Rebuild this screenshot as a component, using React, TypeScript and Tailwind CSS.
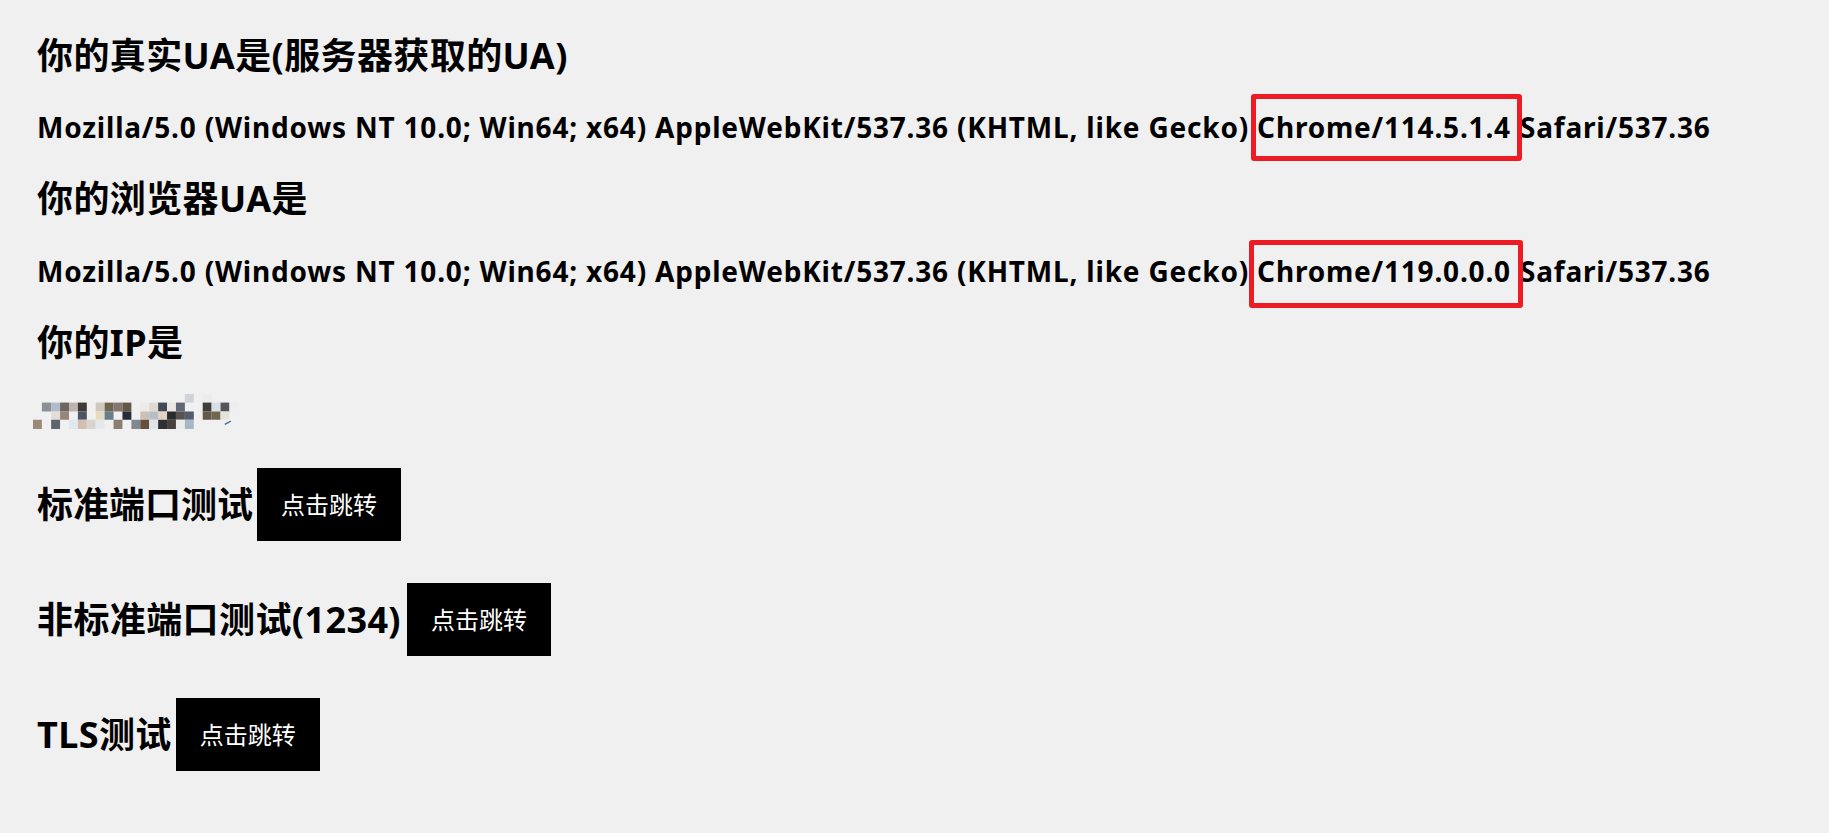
import React from "react";

type R = [number, number, string];

const rows: { y0: number; y1: number; cells: R[] }[] = [
  { y0: 42, y1: 68, cells: [[495, 522, "#d0d4d8"], [549, 576, "#ececec"]] },
  {
    y0: 68,
    y1: 95,
    cells: [
      [62, 90, "#8c8f94"], [90, 117, "#b0bccb"], [117, 144, "#6c6560"], [144, 171, "#bfb3ad"],
      [171, 198, "#3e3a36"], [225, 252, "#cfc8bf"], [252, 279, "#6e6550"], [279, 306, "#857670"],
      [306, 333, "#62584a"], [360, 387, "#ebebe9"], [387, 414, "#e0d9d0"], [414, 441, "#3f4b59"],
      [441, 468, "#ece6e0"], [468, 495, "#5f6873"], [549, 576, "#403c3a"], [576, 603, "#d9dfe6"],
      [603, 630, "#55545c"], [630, 657, "#eeeeee"],
    ],
  },
  {
    y0: 95,
    y1: 120,
    cells: [
      [90, 117, "#e4ddd6"], [117, 144, "#978677"], [171, 198, "#4c5564"], [225, 252, "#e6dbc2"],
      [252, 279, "#667e8a"], [306, 333, "#272c3a"], [360, 387, "#cbc1b4"], [387, 414, "#b4bec8"],
      [414, 441, "#e3d2bf"], [441, 468, "#2a2c30"], [468, 495, "#555250"], [495, 522, "#525c6c"],
      [549, 576, "#66584a"], [576, 603, "#716552"], [603, 630, "#e6e3dd"],
    ],
  },
  {
    y0: 120,
    y1: 148,
    cells: [
      [35, 62, "#9a8a78"], [90, 117, "#5e646c"], [144, 171, "#e1e8ee"], [171, 198, "#d4bdb3"],
      [198, 225, "#d8d4d0"], [225, 252, "#e4eaec"], [279, 306, "#8a7e73"], [333, 360, "#828890"],
      [360, 387, "#66503d"], [387, 414, "#e0e4e8"], [414, 441, "#303132"], [441, 468, "#48423e"],
      [468, 495, "#ececec"], [495, 522, "#a8b6c6"],
    ],
  },
];

function IpBlur() {
  return (
    <svg width={210} height={35} viewBox="35 42 630 106" className="block">
      {rows.map((r, i) =>
        r.cells.map(([x0, x1, c], j) => (
          <rect key={`${i}-${j}`} x={x0} y={r.y0} width={x1 - x0} height={r.y1 - r.y0} fill={c} />
        ))
      )}
      <path d="M616 134 L634 124" stroke="#3b6ea8" strokeWidth={4} />
    </svg>
  );
}

function JumpButton() {
  return (
    <button className="bg-black text-white text-[24px] font-normal leading-none tracking-normal w-[144px] h-[73px] shrink-0">
      点击跳转
    </button>
  );
}

export default function App() {
  return (
    <div className="min-h-screen bg-[#f0f0f0] text-black [font-family:'Noto_Sans','Noto_Sans_CJK_SC',sans-serif] pl-[37px] pt-[32px]">
      <h2 className="text-[36px] leading-[48px] font-bold tracking-[0.4px]">你的真实UA是(服务器获取的UA)</h2>
      <p className="mt-[27px] text-[28px] leading-[40px] font-bold tracking-[0.8px] whitespace-nowrap">
        Mozilla/5.0 (Windows NT 10.0; Win64; x64) AppleWebKit/537.36 (KHTML, like Gecko){" "}
        <span className="relative">
          Chrome/114.5.1.4
          <span className="absolute -left-[6px] -right-[11px] -top-[14px] -bottom-[15px] border-[5px] border-[#ed1c24] rounded-[3px]" />
        </span>{" "}
        <span className="ml-[1px]">Safari/537.36</span>
      </p>
      <h2 className="mt-[28px] text-[36px] leading-[48px] font-bold tracking-[0.4px]">你的浏览器UA是</h2>
      <p className="mt-[28px] text-[28px] leading-[40px] font-bold tracking-[0.8px] whitespace-nowrap">
        Mozilla/5.0 (Windows NT 10.0; Win64; x64) AppleWebKit/537.36 (KHTML, like Gecko){" "}
        <span className="relative">
          Chrome/119.0.0.0
          <span className="absolute -left-[8px] -right-[12px] -top-[12px] -bottom-[18px] border-[5px] border-[#ed1c24] rounded-[3px]" />
        </span>{" "}
        <span className="ml-[1px]">Safari/537.36</span>
      </p>
      <h2 className="mt-[28px] text-[36px] leading-[48px] font-bold tracking-[0.4px]">你的IP是</h2>
      <div className="mt-[27px] -ml-[5px]">
        <IpBlur />
      </div>
      <div className="mt-[39px] flex items-center gap-[4px]">
        <h2 className="text-[36px] leading-[48px] font-bold">标准端口测试</h2>
        <JumpButton />
      </div>
      <div className="mt-[42px] flex items-center gap-[6px]">
        <h2 className="text-[36px] leading-[48px] font-bold tracking-[0.4px]">非标准端口测试(1234)</h2>
        <JumpButton />
      </div>
      <div className="mt-[42px] flex items-center gap-[4px]">
        <h2 className="text-[36px] leading-[48px] font-bold tracking-[0.4px]">TLS测试</h2>
        <JumpButton />
      </div>
    </div>
  );
}
